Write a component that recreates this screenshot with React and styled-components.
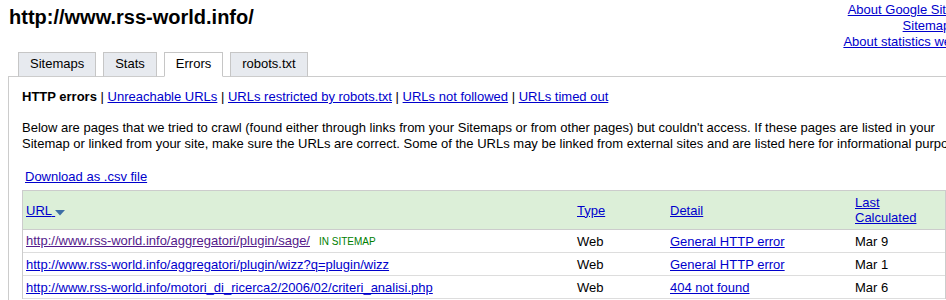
import React from "react";
import styled, { createGlobalStyle } from "styled-components";

// Webmaster tools "Errors" tab for one site: header, tab strip, error
// sub-navigation, explanation and the table of URLs that failed.

const GlobalStyle = createGlobalStyle`
  html, body {
    margin: 0;
    padding: 0;
    background: #fff;
    overflow: hidden;
  }
  body {
    font-family: "Liberation Sans", Arial, sans-serif;
    font-size: 13px;
    color: #000;
  }
`;

const subNav = [
  "Unreachable URLs",
  "URLs restricted by robots.txt",
  "URLs not followed",
  "URLs timed out",
];

const tabs = ["Sitemaps", "Stats", "Errors", "robots.txt"];

const errors = [
  {
    url: "http://www.rss-world.info/aggregatori/plugin/sage/",
    visited: true,
    inSitemap: true,
    type: "Web",
    detail: "General HTTP error",
    date: "Mar 9",
  },
  {
    url: "http://www.rss-world.info/aggregatori/plugin/wizz?q=plugin/wizz",
    type: "Web",
    detail: "General HTTP error",
    date: "Mar 1",
  },
  {
    url: "http://www.rss-world.info/motori_di_ricerca2/2006/02/criteri_analisi.php",
    type: "Web",
    detail: "404 not found",
    date: "Mar 6",
  },
];

export default function App() {
  return (
    <Page>
      <GlobalStyle />
      <Header>
        <SiteTitle>http://www.rss-world.info/</SiteTitle>
        <HelpLinks>
          <Link href="#">About Google Sitemaps</Link>
          <Link href="#">Sitemaps blog</Link>
          <Link href="#">About statistics we show</Link>
        </HelpLinks>
      </Header>

      <TabStrip>
        {tabs.map((t) => (
          <Tab key={t} $active={t === "Errors"}>
            {t}
          </Tab>
        ))}
      </TabStrip>

      <Panel>
        <SubNav>
          <strong>HTTP errors</strong>
          {subNav.map((s) => (
            <React.Fragment key={s}>
              {" | "}
              <Link href="#">{s}</Link>
            </React.Fragment>
          ))}
        </SubNav>

        <Intro>
          Below are pages that we tried to crawl (found either through links
          from your Sitemaps or from other pages) but couldn't access. If these
          pages are listed in your Sitemap or linked from your site, make sure
          the URLs are correct. Some of the URLs may be linked from external
          sites and are listed here for informational purposes.
        </Intro>

        <Download>
          <Link href="#">Download as .csv file</Link>
        </Download>

        <Table>
          <HeadRow>
            <Cell>
              <Link href="#">
                URL{" "}
                <SortArrow width="10" height="6" viewBox="0 0 10 6">
                  <path d="M0 0h10L5 5.5z" fill="#3c6ea6" />
                </SortArrow>
              </Link>
            </Cell>
            <Cell>
              <Link href="#">Type</Link>
            </Cell>
            <Cell>
              <Link href="#">Detail</Link>
            </Cell>
            <Cell>
              <Link href="#">
                Last
                <br />
                Calculated
              </Link>
            </Cell>
          </HeadRow>
          {errors.map((e) => (
            <Row key={e.url}>
              <Cell>
                <Link href="#" $visited={e.visited}>
                  {e.url}
                </Link>
                {e.inSitemap && <SitemapTag>IN SITEMAP</SitemapTag>}
              </Cell>
              <Cell>{e.type}</Cell>
              <Cell>
                <Link href="#">{e.detail}</Link>
              </Cell>
              <Cell>{e.date}</Cell>
            </Row>
          ))}
        </Table>
      </Panel>
    </Page>
  );
}

const Page = styled.div`
  width: 977px;
  margin-left: 8px;
`;

const Header = styled.div`
  display: flex;
  justify-content: space-between;
  align-items: flex-start;
  height: 52px;
`;

const SiteTitle = styled.h1`
  margin: 6px 0 0 1px;
  font-size: 20px;
  line-height: 23px;
  font-weight: bold;
`;

const HelpLinks = styled.div`
  margin-top: 2px;
  display: flex;
  flex-direction: column;
  align-items: flex-end;
  line-height: 16px;
`;

const Link = styled.a`
  color: ${({ $visited }) => ($visited ? "#551a8b" : "#0000cc")};
  text-decoration: underline;
`;

const TabStrip = styled.div`
  display: flex;
  gap: 7px;
  padding-left: 10px;
  border-bottom: 1px solid #cccccc;
`;

const Tab = styled.div`
  padding: 3px 11px 4px;
  line-height: 16px;
  margin-bottom: -1px;
  border: 1px solid #c6c6c6;
  border-bottom-color: ${({ $active }) => ($active ? "#fff" : "#cccccc")};
  background: ${({ $active }) => ($active ? "#fff" : "#e7eaef")};
  color: #000;
`;

const Panel = styled.div`
  border-left: 1px solid #cccccc;
  padding: 12px 0 0 13px;
  height: 240px;
`;

const SubNav = styled.div`
  line-height: 16px;

  strong {
    font-weight: bold;
  }
`;

const Intro = styled.p`
  margin: 15px 0 0;
  padding-right: 8px;
  line-height: 16px;
`;

const Download = styled.div`
  margin-top: 17px;
  padding-left: 3px;
  line-height: 16px;
`;

const Table = styled.div`
  margin-top: 5px;
  width: 922px;
  border: 1px solid #cccccc;
  border-bottom: none;
`;

const Row = styled.div`
  display: grid;
  grid-template-columns: 551px 93px 185px 1fr;
  align-items: center;
  height: 22px;
  border-bottom: 1px solid #dddddd;
  line-height: 15px;
`;

const HeadRow = styled(Row)`
  height: 38px;
  background: #dcefd8;
  border-bottom-color: #cccccc;
`;

const Cell = styled.div`
  padding-left: 3px;
  white-space: nowrap;
`;

const SortArrow = styled.svg`
  vertical-align: -1px;
`;

const SitemapTag = styled.span`
  margin-left: 9px;
  font-size: 10px;
  color: #008000;
`;
